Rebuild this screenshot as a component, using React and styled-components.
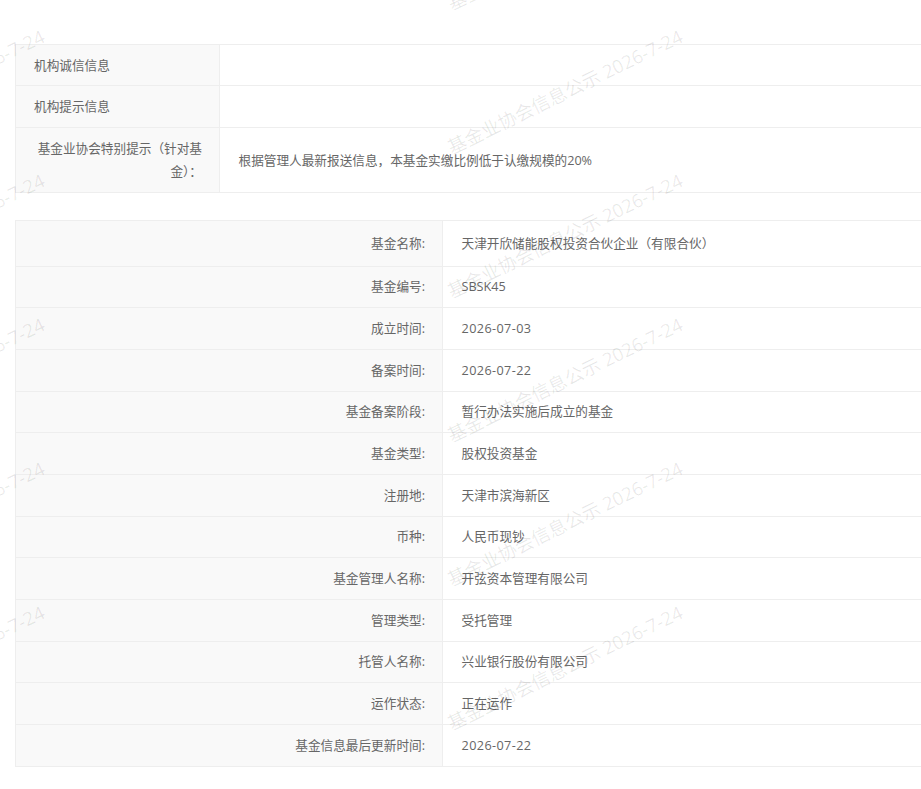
import React from 'react';
import styled, { createGlobalStyle } from 'styled-components';

const notices = [
  { label: '机构诚信信息', height: 41 },
  { label: '机构提示信息', height: 42 },
  {
    label: '基金业协会特别提示（针对基金）：',
    value: '根据管理人最新报送信息，本基金实缴比例低于认缴规模的20%',
    height: 65,
    right: true,
  },
];

const funds = [
  ['基金名称:', '天津开欣储能股权投资合伙企业（有限合伙）'],
  ['基金编号:', 'SBSK45'],
  ['成立时间:', '2026-07-03'],
  ['备案时间:', '2026-07-22'],
  ['基金备案阶段:', '暂行办法实施后成立的基金'],
  ['基金类型:', '股权投资基金'],
  ['注册地:', '天津市滨海新区'],
  ['币种:', '人民币现钞'],
  ['基金管理人名称:', '开弦资本管理有限公司'],
  ['管理类型:', '受托管理'],
  ['托管人名称:', '兴业银行股份有限公司'],
  ['运作状态:', '正在运作'],
  ['基金信息最后更新时间:', '2026-07-22'],
];

const App = () => {
  return (
    <Page>
      <GlobalStyle />
      <Table $top={44}>
        {notices.map((item) => (
          <Row key={item.label} $columns="204px 1fr" $height={item.height}>
            <Label $right={item.right}>{item.label}</Label>
            <Value>{item.value}</Value>
          </Row>
        ))}
      </Table>
      <Table $top={27}>
        {funds.map(([label, value], index) => (
          <Row key={label} $columns="427px 1fr" $height={index === 0 ? 45.67 : 41.67}>
            <Label $right>{label}</Label>
            <Value $date={/^\d{4}-/.test(value)}>{value}</Value>
          </Row>
        ))}
      </Table>
      <Watermarks>
        {Array.from({ length: 12 }).map((_, index) => (
          <Tile key={index}>
            <Mark>基金业协会信息公示 2026-7-24</Mark>
          </Tile>
        ))}
      </Watermarks>
    </Page>
  );
};

const GlobalStyle = createGlobalStyle`
  html, body {
    margin: 0;
    padding: 0;
    height: 100%;
    overflow: hidden;
    background: #fff;
  }
`;

const Page = styled.div`
  position: relative;
  height: 789px;
  padding-left: 15px;
  overflow: hidden;
  font-family: "Open Sans", "Noto Sans CJK SC", sans-serif;
  font-size: 12.65px;
  color: #666;
`;

const Table = styled.div`
  width: 1100px;
  margin-top: ${(props) => props.$top}px;
  border-top: 1px solid #eee;
  border-left: 1px solid #eee;
`;

const Row = styled.div`
  display: grid;
  grid-template-columns: ${(props) => props.$columns};
  height: ${(props) => props.$height}px;
  box-sizing: border-box;
  border-bottom: 1px solid #eee;
`;

const Label = styled.div`
  display: flex;
  align-items: center;
  justify-content: ${(props) => (props.$right ? 'flex-end' : 'flex-start')};
  text-align: ${(props) => (props.$right ? 'right' : 'left')};
  padding: 0 17px 0 18px;
  line-height: 23px;
  background: #f9f9f9;
  border-right: 1px solid #eee;
`;

const Value = styled.div`
  display: flex;
  align-items: center;
  padding: 0 18.5px;
  line-height: 23px;
  letter-spacing: ${(props) => (props.$date ? '0.4px' : '0')};
`;

const Watermarks = styled.div`
  position: absolute;
  top: -126px;
  left: -393px;
  display: grid;
  grid-template-columns: repeat(2, 638px);
  grid-auto-rows: 144px;
  pointer-events: none;
`;

const Tile = styled.div`
  display: flex;
  align-items: center;
  justify-content: center;
`;

const Mark = styled.span`
  transform: rotate(-26deg);
  white-space: nowrap;
  font-size: 18.6px;
  color: rgba(0, 0, 0, 0.09);
`;

export default App;
